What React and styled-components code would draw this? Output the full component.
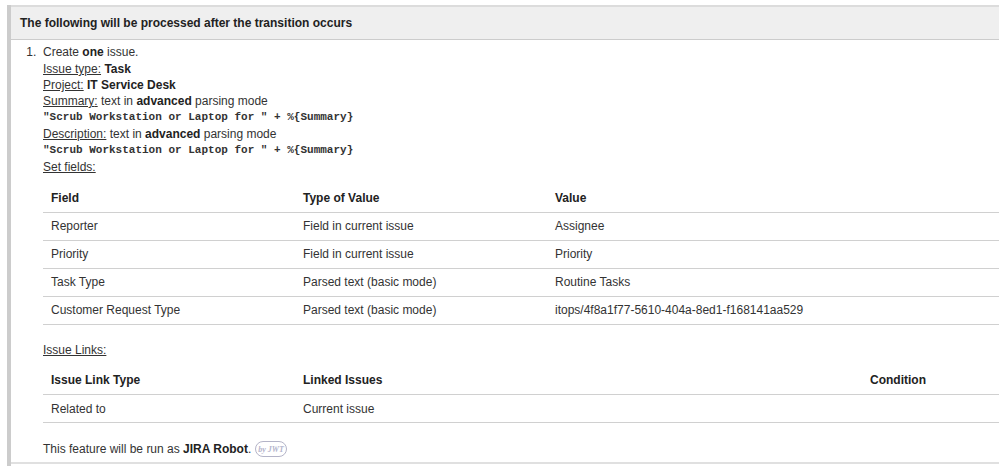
import styled, { createGlobalStyle } from "styled-components";

const GlobalStyle = createGlobalStyle`
  * {
    box-sizing: border-box;
  }

  body {
    margin: 0;
    background-color: white;
    color: #333;
    font-family: "Liberation Sans", Arial, sans-serif;
    font-size: 12px;
    line-height: 16px;
  }
`;

const Container = styled.main`
  display: flex;
  min-height: 100vh;
  padding: 5px 0px 0px 7px;
`;

const Panel = styled.section`
  flex: 1;
  border-left: 4px solid #ccc;
`;

const Title = styled.h1`
  margin: 0px;
  padding: 8px 9px;
  background-color: #efefef;
  border-top: 2px solid #dcdcdc;
  border-bottom: 1px solid #ccc;
  color: #222;
  font-size: 12px;
  font-weight: 700;
`;

const Actions = styled.ol`
  margin: 0px;
  padding: 4px 0px 4px 32px;
  border-bottom: 2px solid #e0e0e0;
`;

const Action = styled.li`
  &::marker {
    content: counter(list-item) ".\\00a0\\00a0";
  }
`;

const Line = styled.div`
  line-height: ${(props) => (props.$tall ? "17px" : "16px")};
`;

const Label = styled.span`
  text-decoration: underline;
`;

const Bold = styled.b`
  color: #222;
`;

const Code = styled.code`
  display: block;
  font-family: "Liberation Mono", "Courier New", monospace;
  font-size: 11px;
  font-weight: 700;
  line-height: 17px;
`;

const Table = styled.table`
  width: 100%;
  margin: 9px 0px 17px;
  border-collapse: collapse;
  table-layout: fixed;
`;

const Col = styled.col`
  width: ${(props) => props.$width || "auto"};
`;

const Head = styled.th`
  height: 28px;
  padding: 0px 8px;
  border-bottom: 1px solid #d0d0d0;
  color: #222;
  text-align: left;
`;

const Cell = styled.td`
  height: 28px;
  padding: 0px 8px;
  border-bottom: 1px solid #d0d0d0;
`;

const RunAs = styled.div`
  display: flex;
  align-items: center;
  gap: 4px;
`;

const Badge = styled.svg`
  width: 32px;
  height: 18px;
`;

const fields = [
  ["Reporter", "Field in current issue", "Assignee"],
  ["Priority", "Field in current issue", "Priority"],
  ["Task Type", "Parsed text (basic mode)", "Routine Tasks"],
  [
    "Customer Request Type",
    "Parsed text (basic mode)",
    "itops/4f8a1f77-5610-404a-8ed1-f168141aa529",
  ],
];

const links = [["Related to", "Current issue", ""]];

const DataTable = ({ heads, widths, rows }) => {
  return (
    <Table>
      <colgroup>
        {widths.map((width, i) => (
          <Col key={i} $width={width} />
        ))}
      </colgroup>
      <thead>
        <tr>
          {heads.map((head) => (
            <Head key={head} scope="col">
              {head}
            </Head>
          ))}
        </tr>
      </thead>
      <tbody>
        {rows.map((row) => (
          <tr key={row[0]}>
            {row.map((value, i) => (
              <Cell key={i}>{value}</Cell>
            ))}
          </tr>
        ))}
      </tbody>
    </Table>
  );
};

const ParsedText = ({ label, text }) => {
  return (
    <>
      <Line>
        <Label>{label}:</Label> text in <Bold>advanced</Bold> parsing mode
      </Line>
      <Code>{text}</Code>
    </>
  );
};

const JwtBadge = () => {
  return (
    <Badge viewBox="0 0 32 18" role="img" aria-label="by JWT">
      <rect
        x="0.5"
        y="1.5"
        width="31"
        height="15"
        rx="7.5"
        fill="white"
        stroke="#b4b4c8"
      />
      <text
        x="16"
        y="12"
        textAnchor="middle"
        fill="#b4b4cc"
        fontFamily="Liberation Serif, serif"
        fontSize="8"
        fontStyle="italic"
        fontWeight="700"
      >
        by JWT
      </text>
    </Badge>
  );
};

const App = () => {
  const summary = '"Scrub Workstation or Laptop for " + %{Summary}';

  return (
    <Container>
      <GlobalStyle />
      <Panel>
        <Title>The following will be processed after the transition occurs</Title>
        <Actions>
          <Action>
            <Line $tall>
              Create <Bold>one</Bold> issue.
            </Line>
            <Line>
              <Label>Issue type:</Label> <Bold>Task</Bold>
            </Line>
            <Line>
              <Label>Project:</Label> <Bold>IT Service Desk</Bold>
            </Line>
            <ParsedText label="Summary" text={summary} />
            <ParsedText label="Description" text={summary} />
            <Line>
              <Label>Set fields:</Label>
            </Line>
            <DataTable
              heads={["Field", "Type of Value", "Value"]}
              widths={["252px", "252px", ""]}
              rows={fields}
            />
            <Line>
              <Label>Issue Links:</Label>
            </Line>
            <DataTable
              heads={["Issue Link Type", "Linked Issues", "Condition"]}
              widths={["252px", "", "137px"]}
              rows={links}
            />
            <RunAs>
              <span>
                This feature will be run as <Bold>JIRA Robot</Bold>.
              </span>
              <JwtBadge />
            </RunAs>
          </Action>
        </Actions>
      </Panel>
    </Container>
  );
};

export default App;
